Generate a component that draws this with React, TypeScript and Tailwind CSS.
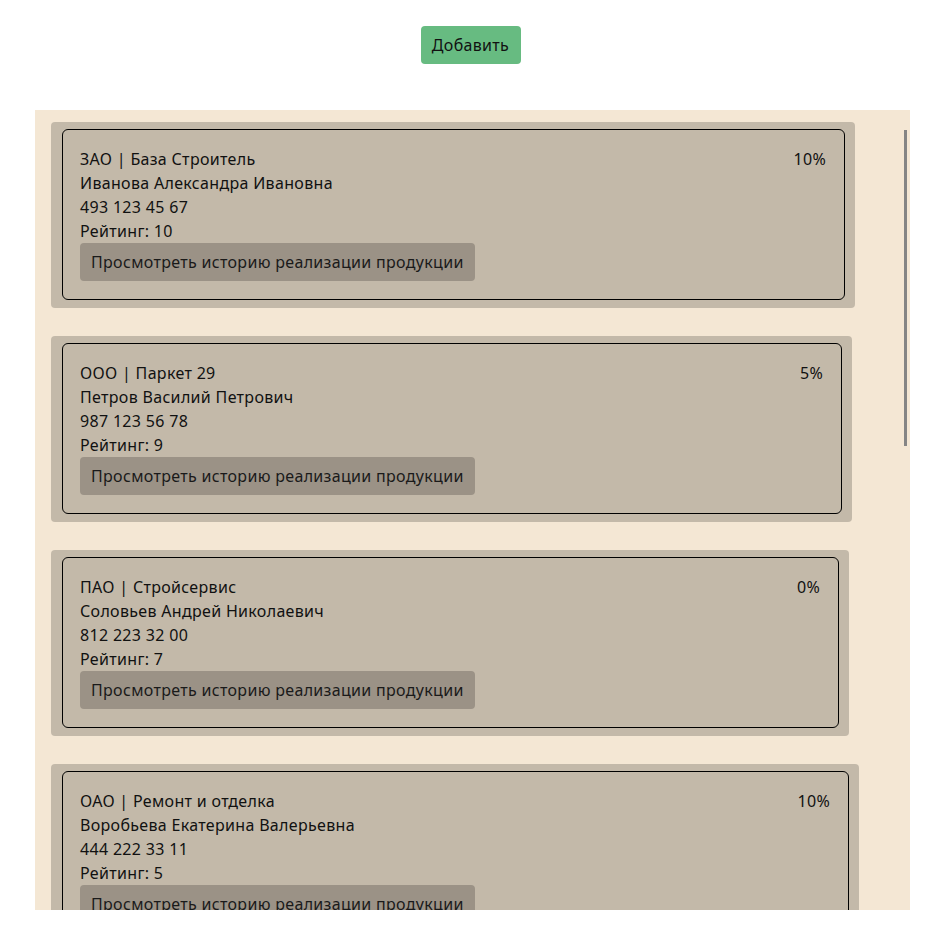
import React from "react";

type Partner = {
  type: string;
  name: string;
  director: string;
  phone: string;
  rating: number;
  discount: string;
  width: string;
};

const partners: Partner[] = [
  { type: "ЗАО", name: "База Строитель", director: "Иванова Александра Ивановна", phone: "493 123 45 67", rating: 10, discount: "10%", width: "w-[804px]" },
  { type: "ООО", name: "Паркет 29", director: "Петров Василий Петрович", phone: "987 123 56 78", rating: 9, discount: "5%", width: "w-[801px]" },
  { type: "ПАО", name: "Стройсервис", director: "Соловьев Андрей Николаевич", phone: "812 223 32 00", rating: 7, discount: "0%", width: "w-[798px]" },
  { type: "ОАО", name: "Ремонт и отделка", director: "Воробьева Екатерина Валерьевна", phone: "444 222 33 11", rating: 5, discount: "10%", width: "w-[808px]" },
];

function Card({ p }: { p: Partner }) {
  return (
    <div className={`${p.width} shrink-0 rounded-[4px] bg-[#c3b9a9] pl-[11px] pr-[10px] pt-[7px] pb-[8px]`}>
      <div className="flex justify-between rounded-[6px] border border-black pl-[17px] pr-[18px] pt-[17px] pb-[18px]">
        <div className="flex flex-col items-start">
          <div>{p.type} | {p.name}</div>
          <div>{p.director}</div>
          <div>{p.phone}</div>
          <div>Рейтинг: {p.rating}</div>
          <button className="rounded-[4px] bg-[#9b9286] px-[11px] py-[7px] leading-6 tracking-[0.32px] text-[#1a1a1a]">
            Просмотреть историю реализации продукции
          </button>
        </div>
        <div>{p.discount}</div>
      </div>
    </div>
  );
}

export default function App() {
  return (
    <div className="min-h-[947px] bg-white text-[16px] leading-6 tracking-[0.32px] text-[#111] font-['Noto_Sans','Open_Sans',sans-serif]">
      <div className="flex justify-center pt-[26px]">
        <button className="h-[38px] w-[100px] rounded-[4px] bg-[#67bb81] text-[16px] tracking-[0.32px] text-[#111]">
          Добавить
        </button>
      </div>
      <div className="relative mx-[35px] mt-[46px] h-[800px] w-[875px] overflow-hidden bg-[#f4e7d4]">
        <div className="flex flex-col gap-[28px] pl-[16px] pt-[12px]">
          {partners.map((p) => (
            <Card key={p.phone} p={p} />
          ))}
        </div>
        <div className="absolute right-[3px] top-[20px] h-[316px] w-[3px] bg-[#858585]" />
      </div>
    </div>
  );
}
